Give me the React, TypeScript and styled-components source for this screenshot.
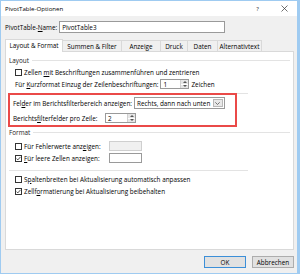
import React, { FC, ReactNode } from "react";
import styled, { createGlobalStyle } from "styled-components";

const GlobalStyle = createGlobalStyle`
  html, body {
    margin: 0;
    padding: 0;
    background: #fff;
  }
  body {
    font-family: "Segoe UI", "Open Sans", "Noto Sans", sans-serif;
    font-size: 6.35px;
    color: #000;
  }
`

const Window = styled.div`
  width: 300px;
  height: 274px;
  box-sizing: border-box;
  border: 1px solid #9fcbf1;
  border-right-width: 3px;
  background: #f0f0f0;
  display: flex;
  flex-direction: column;
`

const TitleBar = styled.div`
  height: 15px;
  background: #fff;
  display: flex;
  align-items: center;
  padding-left: 4px;
  font-size: 6.1px;
`

const TitleButtons = styled.div`
  margin-left: auto;
  display: flex;
  align-items: center;
  gap: 22px;
  padding-right: 9px;
  color: #333;
`

const Body = styled.div`
  padding: 5px 3px 0 4px;
  display: flex;
  flex-direction: column;
`

const NameRow = styled.div`
  height: 12px;
  display: flex;
  align-items: center;
  gap: 2px;
  white-space: nowrap;
`

const TextInput = styled.div<{ $w: number; $disabled?: boolean }>`
  width: ${p => p.$w}px;
  height: 100%;
  box-sizing: border-box;
  border: 1px solid ${p => (p.$disabled ? "#cfcfcf" : "#9a9a9a")};
  background: ${p => (p.$disabled ? "#f0f0f0" : "#fff")};
  display: flex;
  align-items: center;
  padding-left: 2px;
  flex: none;
`

const TabStrip = styled.div`
  margin-top: 5px;
  height: 13px;
  display: flex;
  align-items: flex-end;
`

const Tab = styled.div<{ $active?: boolean; $w: number }>`
  width: ${p => p.$w}px;
  height: ${p => (p.$active ? 13 : 11)}px;
  box-sizing: border-box;
  display: flex;
  align-items: center;
  justify-content: center;
  white-space: nowrap;
  border: 1px solid #d9d9d9;
  border-bottom: none;
  margin-left: ${p => (p.$active ? 0 : -1)}px;
  background: ${p => (p.$active ? "#fff" : "#f0f0f0")};
  position: relative;
  z-index: ${p => (p.$active ? 1 : 0)};
  margin-bottom: ${p => (p.$active ? -1 : 0)}px;
  padding-bottom: ${p => (p.$active ? 1 : 0)}px;
`

const Panel = styled.div`
  height: 199px;
  box-sizing: border-box;
  background: #fff;
  border: 1px solid #d9d9d9;
  padding: 4px 3px 0 3px;
  display: flex;
  flex-direction: column;
`

const SectionHead = styled.div<{ $mt?: number }>`
  height: 9px;
  margin-top: ${p => p.$mt ?? 0}px;
  display: flex;
  align-items: center;
  gap: 3px;
  color: #1a1a1a;
  &::after {
    content: "";
    flex: 1;
    height: 1px;
    background: #e3e3e3;
  }
`

const Row = styled.div<{ $mt?: number; $indent?: number; $h?: number }>`
  height: ${p => p.$h ?? 10}px;
  margin-top: ${p => p.$mt ?? 0}px;
  padding-left: ${p => p.$indent ?? 6}px;
  display: flex;
  align-items: center;
  gap: 2px;
  white-space: nowrap;
`

const Label = styled.span<{ $w?: number }>`
  ${p => (p.$w ? `width: ${p.$w}px; flex: none;` : "")}
  u {
    text-decoration-thickness: 0.5px;
    text-underline-offset: 1px;
  }
`

const Separator = styled.div<{ $mt: number }>`
  margin-top: ${p => p.$mt}px;
  width: 239px;
  height: 1px;
  background: #e3e3e3;
`

const Highlight = styled.div`
  margin-top: -1px;
  margin-left: -1px;
  width: 229px;
  box-sizing: border-box;
  border: 2px solid #ea4a48;
  padding: 2px 0 1px 3px;
  display: flex;
  flex-direction: column;
`

const Box = styled.div`
  width: 7px;
  height: 7px;
  box-sizing: border-box;
  border: 1px solid #333;
  background: #fff;
  flex: none;
  display: flex;
  align-items: center;
  justify-content: center;
`

const SpinBox = styled.div<{ $w: number }>`
  width: ${p => p.$w}px;
  height: 10px;
  box-sizing: border-box;
  border: 1px solid #9a9a9a;
  background: #fff;
  display: flex;
  align-items: center;
  flex: none;
`

const SpinValue = styled.span`
  flex: 1;
  padding-left: 2px;
`

const SpinArrows = styled.div`
  width: 7px;
  height: 100%;
  display: flex;
  flex-direction: column;
  border-left: 1px solid #d0d0d0;
`

const SpinHalf = styled.div`
  flex: 1;
  background: #e6e6e6;
  display: flex;
  align-items: center;
  justify-content: center;
  & + & {
    border-top: 1px solid #fff;
  }
`

const Select = styled.div`
  width: 91px;
  height: 12px;
  box-sizing: border-box;
  border: 1px solid #9a9a9a;
  background: #fff;
  display: flex;
  align-items: center;
  flex: none;
`

const SelectValue = styled.span`
  flex: 1;
  padding-left: 2px;
`

const SelectArrow = styled.div`
  width: 10px;
  height: 8px;
  margin-right: 1px;
  box-sizing: border-box;
  border: 1px solid #b8b8b8;
  background: #e8e8e8;
  display: flex;
  align-items: center;
  justify-content: center;
`

const Footer = styled.div`
  margin-top: 6px;
  height: 12px;
  display: flex;
  justify-content: flex-end;
  gap: 6px;
`

const Button = styled.div<{ $primary?: boolean }>`
  width: 42px;
  height: 12px;
  box-sizing: border-box;
  border: 1px solid ${p => (p.$primary ? "#3c8fd8" : "#adadad")};
  background: #e1e1e1;
  display: flex;
  align-items: center;
  justify-content: center;
`

const Check: FC = () => (
  <svg width="5" height="5" viewBox="0 0 5 5">
    <polyline points="0.5,2.6 1.8,3.9 4.5,0.9" fill="none" stroke="#222" strokeWidth="0.8" />
  </svg>
)

const Checkbox: FC<{ checked?: boolean }> = ({ checked }) => (
  <Box>{checked && <Check />}</Box>
)

const Tri: FC<{ up?: boolean }> = ({ up }) => (
  <svg width="4" height="2" viewBox="0 0 4 2">
    <polygon points={up ? "0,2 4,2 2,0" : "0,0 4,0 2,2"} fill="#555" />
  </svg>
)

const Spinner: FC<{ value: string; w: number }> = ({ value, w }) => (
  <SpinBox $w={w}>
    <SpinValue>{value}</SpinValue>
    <SpinArrows>
      <SpinHalf><Tri up /></SpinHalf>
      <SpinHalf><Tri /></SpinHalf>
    </SpinArrows>
  </SpinBox>
)

const CheckRow: FC<{ checked?: boolean; mt?: number; children: ReactNode }> = (props) => (
  <Row $mt={props.mt}>
    <Checkbox checked={props.checked} />
    {props.children}
  </Row>
)

const tabs = [
  { title: "Layout & Format", w: 58 },
  { title: "Summen & Filter", w: 60 },
  { title: "Anzeige", w: 40 },
  { title: "Druck", w: 28 },
  { title: "Daten", w: 31 },
  { title: "Alternativtext", w: 45 },
]

const App: FC = () => {
  return (
    <>
      <GlobalStyle />
      <Window>
        <TitleBar>
          PivotTable-Optionen
          <TitleButtons>
            <span>?</span>
            <svg width="7" height="7" viewBox="0 0 7 7">
              <path d="M0.5 0.5 L6.5 6.5 M6.5 0.5 L0.5 6.5" stroke="#333" strokeWidth="0.7" />
            </svg>
          </TitleButtons>
        </TitleBar>
        <Body>
          <NameRow>
            <Label>PivotTable-<u>N</u>ame:</Label>
            <TextInput $w={166}>PivotTable3</TextInput>
          </NameRow>
          <TabStrip>
            {tabs.map((t, i) => (
              <Tab key={t.title} $w={t.w} $active={i === 0}>{t.title}</Tab>
            ))}
          </TabStrip>
          <Panel>
            <SectionHead>Layout</SectionHead>
            <CheckRow mt={2}>
              <Label>Zellen <u>m</u>it Beschriftungen zusammenführen und zentrieren</Label>
            </CheckRow>
            <Row $mt={2}>
              <Label>Für <u>K</u>urzformat Einzug der Zeilenbeschriftungen:</Label>
              <Spinner value="1" w={29} />
              <Label>Zeichen</Label>
            </Row>
            <Separator $mt={4} />
            <Highlight>
              <Row $indent={0} $h={12}>
                <Label>Fel<u>d</u>er im Berichtsfilterbereich anzeigen:</Label>
                <Select>
                  <SelectValue>Rechts, dann nach unten</SelectValue>
                  <SelectArrow>
                    <svg width="5" height="3" viewBox="0 0 5 3">
                      <polyline points="0.3,0.3 2.5,2.5 4.7,0.3" fill="none" stroke="#444" strokeWidth="0.7" />
                    </svg>
                  </SelectArrow>
                </Select>
              </Row>
              <Row $indent={0} $mt={3} $h={12}>
                <Label $w={90}>Berichts<u>f</u>ilterfelder pro Zeile:</Label>
                <Spinner value="2" w={31} />
              </Row>
            </Highlight>
            <SectionHead $mt={1}>Format</SectionHead>
            <CheckRow mt={4}>
              <Label $w={83}>Für Fehlerwerte anz<u>e</u>igen:</Label>
              <TextInput $w={33} $disabled />
            </CheckRow>
            <CheckRow checked mt={2}>
              <Label $w={83}><u>F</u>ür leere Zellen anzeigen:</Label>
              <TextInput $w={33} />
            </CheckRow>
            <Separator $mt={7} />
            <CheckRow mt={3}>
              <Label>S<u>p</u>altenbreiten bei Aktualisierung automatisch anpassen</Label>
            </CheckRow>
            <CheckRow checked mt={2}>
              <Label>Zellf<u>o</u>rmatierung bei Aktualisierung beibehalten</Label>
            </CheckRow>
          </Panel>
          <Footer>
            <Button $primary>OK</Button>
            <Button>Abbrechen</Button>
          </Footer>
        </Body>
      </Window>
    </>
  )
}

export default App
